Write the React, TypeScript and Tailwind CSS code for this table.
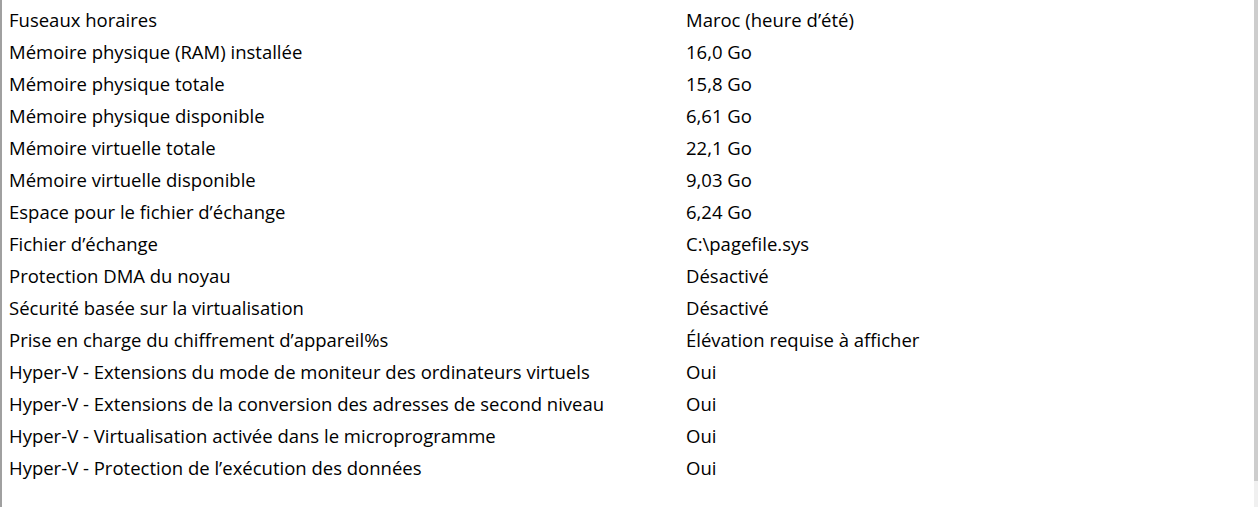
import React from 'react'

const rows: [string, string][] = [
  ['Fuseaux horaires', 'Maroc (heure d’été)'],
  ['Mémoire physique (RAM) installée', '16,0 Go'],
  ['Mémoire physique totale', '15,8 Go'],
  ['Mémoire physique disponible', '6,61 Go'],
  ['Mémoire virtuelle totale', '22,1 Go'],
  ['Mémoire virtuelle disponible', '9,03 Go'],
  ['Espace pour le fichier d’échange', '6,24 Go'],
  ['Fichier d’échange', 'C:\\pagefile.sys'],
  ['Protection DMA du noyau', 'Désactivé'],
  ['Sécurité basée sur la virtualisation', 'Désactivé'],
  ['Prise en charge du chiffrement d’appareil%s', 'Élévation requise à afficher'],
  ['Hyper-V - Extensions du mode de moniteur des ordinateurs virtuels', 'Oui'],
  ['Hyper-V - Extensions de la conversion des adresses de second niveau', 'Oui'],
  ['Hyper-V - Virtualisation activée dans le microprogramme', 'Oui'],
  ['Hyper-V - Protection de l’exécution des données', 'Oui'],
]

export default function App() {
  return (
    <div className="flex h-[507px] w-[1258px] overflow-hidden bg-white font-['Open_Sans',sans-serif] text-[18.5px] text-black">
      <div className="w-[2px] shrink-0 bg-[#a0a0a0]" />
      <div className="flex-1 pt-1">
        {rows.map(([k, v]) => (
          <div key={k} className="flex h-8 items-center leading-none">
            <div className="w-[684px] shrink-0 pl-[7px]">{k}</div>
            <div>{v}</div>
          </div>
        ))}
      </div>
      <div className="flex w-[4px] shrink-0 flex-col bg-[#f0f0f0]">
        <div className="h-[481px] bg-[#cdcdcd]" />
      </div>
    </div>
  )
}
